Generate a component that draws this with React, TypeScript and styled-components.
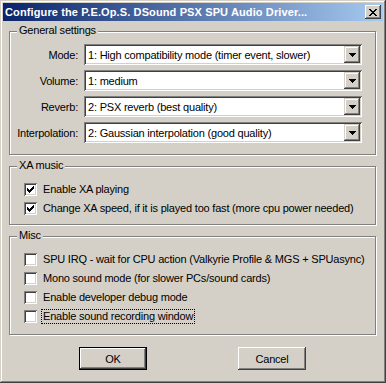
import React from 'react';
import styled, { createGlobalStyle } from 'styled-components';

const FACE = '#d4d0c8';
const SHADOW = '#808080';
const DARK = '#404040';

const GlobalStyle = createGlobalStyle`
  html, body {
    margin: 0;
    padding: 0;
    background: ${FACE};
  }
  * {
    box-sizing: border-box;
  }
`;

const raised = `
  box-shadow: inset -1px -1px 0 ${DARK}, inset 1px 1px 0 #ffffff,
    inset -2px -2px 0 ${SHADOW}, inset 2px 2px 0 ${FACE};
`;

const sunken = `
  box-shadow: inset 1px 1px 0 ${SHADOW}, inset -1px -1px 0 #ffffff,
    inset 2px 2px 0 ${DARK}, inset -2px -2px 0 ${FACE};
`;

const Window = styled.div`
  width: 386px;
  height: 383px;
  padding: 3px;
  display: flex;
  flex-direction: column;
  background: ${FACE};
  font-family: 'Liberation Sans', Arial, sans-serif;
  font-size: 11px;
  letter-spacing: -0.2px;
  color: #000;
  box-shadow: inset -1px -1px 0 ${DARK}, inset 1px 1px 0 ${FACE},
    inset -2px -2px 0 ${SHADOW}, inset 2px 2px 0 #ffffff;
`;

const TitleBar = styled.div`
  height: 18px;
  flex: none;
  display: flex;
  align-items: center;
  justify-content: space-between;
  padding: 0 2px;
  background: linear-gradient(to right, #0a246a, #a6caf0);
`;

const TitleText = styled.span`
  color: #fff;
  font-weight: bold;
  letter-spacing: 0.12px;
  white-space: nowrap;
  line-height: 18px;
`;

const CloseButton = styled.button`
  width: 16px;
  height: 14px;
  padding: 0;
  border: 0;
  display: flex;
  align-items: center;
  justify-content: center;
  background: ${FACE};
  ${raised}
`;

const Client = styled.div`
  flex: 1;
  display: flex;
  flex-direction: column;
  gap: 11px;
  padding: 10px 7px 0 6px;
`;

const Group = styled.div<{ $pt: number; $pb: number }>`
  position: relative;
  border: 1px solid ${SHADOW};
  box-shadow: inset 1px 1px 0 #ffffff, 1px 1px 0 #ffffff;
  padding: ${(p) => p.$pt}px 0 ${(p) => p.$pb}px 0;
`;

const GroupLabel = styled.span`
  position: absolute;
  left: 7px;
  top: -8px;
  padding: 0 2px;
  line-height: 13px;
  background: ${FACE};
`;

const SettingsGrid = styled.div`
  display: grid;
  grid-template-columns: 62px 278px;
  column-gap: 6px;
  row-gap: 5px;
  padding: 0 13px 0 6px;
  align-items: center;
`;

const FieldLabel = styled.label`
  text-align: right;
  white-space: nowrap;
`;

const Combo = styled.div`
  height: 21px;
  display: flex;
  align-items: center;
  padding: 2px;
  background: #fff;
  ${sunken}
`;

const ComboText = styled.span`
  flex: 1;
  padding-left: 2px;
  white-space: nowrap;
  overflow: hidden;
`;

const DropButton = styled.span`
  width: 16px;
  height: 17px;
  display: flex;
  align-items: center;
  justify-content: center;
  background: ${FACE};
  box-shadow: inset -1px -1px 0 ${DARK}, inset 1px 1px 0 ${FACE},
    inset -2px -2px 0 ${SHADOW}, inset 2px 2px 0 #ffffff;
`;

const CheckList = styled.div`
  display: flex;
  flex-direction: column;
  gap: 4px;
  padding-left: 14px;
`;

const CheckRow = styled.div`
  height: 15px;
  display: flex;
  align-items: center;
  gap: 4px;
`;

const Box = styled.span`
  width: 13px;
  height: 13px;
  flex: none;
  display: flex;
  padding: 3px;
  background: #fff;
  ${sunken}
`;

const CheckText = styled.span<{ $focused?: boolean }>`
  height: 15px;
  line-height: 13px;
  padding: 0 1px;
  white-space: nowrap;
  border: 1px dotted ${(p) => (p.$focused ? '#000' : 'transparent')};
`;

const ButtonRow = styled.div`
  display: flex;
  justify-content: center;
  gap: 91px;
  margin-top: 1px;
`;

const PushButton = styled.button<{ $default?: boolean }>`
  width: 68px;
  height: 23px;
  padding: 0;
  font: inherit;
  letter-spacing: inherit;
  color: #000;
  background: ${FACE};
  border: ${(p) => (p.$default ? '1px solid #000' : '0')};
  ${raised}
`;

const Arrow = () => (
  <svg width="7" height="4" viewBox="0 0 7 4" shapeRendering="crispEdges">
    <path d="M0 0h7v1h-1v1h-1v1h-1v1h-1v-1h-1v-1h-1v-1h-1z" fill="#000" />
  </svg>
);

const CloseGlyph = () => (
  <svg width="8" height="7" viewBox="0 0 8 7" shapeRendering="crispEdges">
    <path
      d="M0 0h2v1h-2zM6 0h2v1h-2zM1 1h2v1h-2zM5 1h2v1h-2zM2 2h4v1h-4zM3 3h2v1h-2zM2 4h4v1h-4zM1 5h2v1h-2zM5 5h2v1h-2zM0 6h2v1h-2zM6 6h2v1h-2z"
      fill="#000"
    />
  </svg>
);

const CheckGlyph = () => (
  <svg width="7" height="7" viewBox="0 0 7 7" shapeRendering="crispEdges">
    <path
      d="M6 0h1v3h-1zM5 1h1v3h-1zM4 2h1v3h-1zM3 3h1v3h-1zM2 4h1v3h-1zM1 3h1v3h-1zM0 2h1v3h-1z"
      fill="#000"
    />
  </svg>
);

interface Setting {
  label: string;
  value: string;
}

const settings: Setting[] = [
  { label: 'Mode:', value: '1: High compatibility mode (timer event, slower)' },
  { label: 'Volume:', value: '1: medium' },
  { label: 'Reverb:', value: '2: PSX reverb (best quality)' },
  { label: 'Interpolation:', value: '2: Gaussian interpolation (good quality)' },
];

interface Option {
  text: string;
  checked: boolean;
  focused?: boolean;
}

const xaOptions: Option[] = [
  { text: 'Enable XA playing', checked: true },
  { text: 'Change XA speed, if it is played too fast (more cpu power needed)', checked: true },
];

const miscOptions: Option[] = [
  { text: 'SPU IRQ - wait for CPU action (Valkyrie Profile & MGS + SPUasync)', checked: false },
  { text: 'Mono sound mode (for slower PCs/sound cards)', checked: false },
  { text: 'Enable developer debug mode', checked: false },
  { text: 'Enable sound recording window', checked: false, focused: true },
];

function Checks({ options }: { options: Option[] }) {
  return (
    <CheckList>
      {options.map((o) => (
        <CheckRow key={o.text}>
          <Box>{o.checked && <CheckGlyph />}</Box>
          <CheckText $focused={o.focused}>{o.text}</CheckText>
        </CheckRow>
      ))}
    </CheckList>
  );
}

export default function App() {
  return (
    <>
      <GlobalStyle />
      <Window>
        <TitleBar>
          <TitleText>Configure the P.E.Op.S. DSound PSX SPU Audio Driver...</TitleText>
          <CloseButton aria-label="Close">
            <CloseGlyph />
          </CloseButton>
        </TitleBar>
        <Client>
          <Group $pt={12} $pb={11}>
            <GroupLabel>General settings</GroupLabel>
            <SettingsGrid>
              {settings.map((s) => (
                <React.Fragment key={s.label}>
                  <FieldLabel>{s.label}</FieldLabel>
                  <Combo>
                    <ComboText>{s.value}</ComboText>
                    <DropButton>
                      <Arrow />
                    </DropButton>
                  </Combo>
                </React.Fragment>
              ))}
            </SettingsGrid>
          </Group>
          <Group $pt={15} $pb={8}>
            <GroupLabel>XA music</GroupLabel>
            <Checks options={xaOptions} />
          </Group>
          <Group $pt={15} $pb={10}>
            <GroupLabel>Misc</GroupLabel>
            <Checks options={miscOptions} />
          </Group>
          <ButtonRow>
            <PushButton $default>OK</PushButton>
            <PushButton>Cancel</PushButton>
          </ButtonRow>
        </Client>
      </Window>
    </>
  );
}
